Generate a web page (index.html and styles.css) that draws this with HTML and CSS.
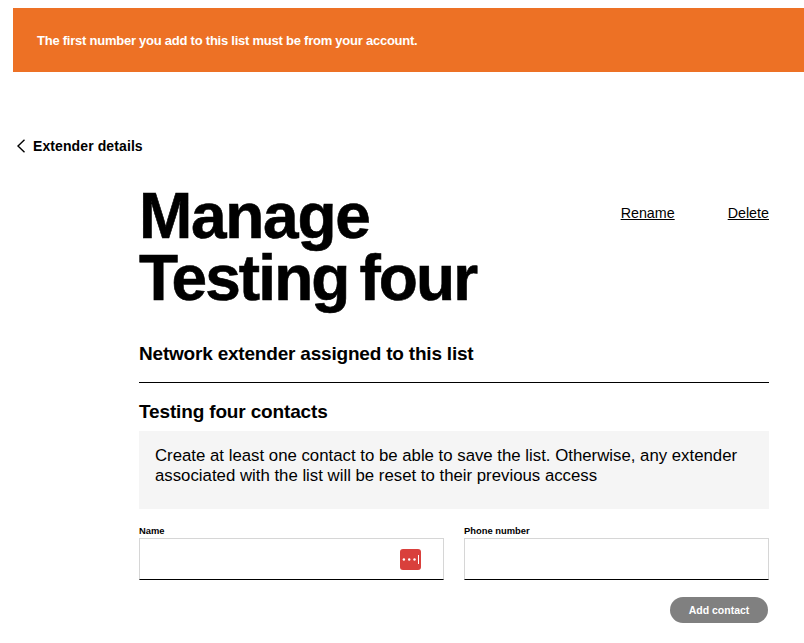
FILE: index.html
```html
<!DOCTYPE html>
<html>
<head>
<meta charset="utf-8">
<title>Manage Testing four</title>
<link rel="stylesheet" href="styles.css">
</head>
<body>
<div class="banner">The first number you add to this list must be from your account.</div>
<a class="back" href="#">
  <svg class="back-icon" width="10" height="14" viewBox="0 0 10 14"><path d="M8.5 0.8 L2 7 L8.5 13.2" fill="none" stroke="#000" stroke-width="1.4"/></svg>
  Extender details
</a>
<div class="main">
  <div class="title-row">
    <h1>Manage<br><span class="title-second">Testing four</span></h1>
    <div class="actions">
      <a href="#">Rename</a>
      <a href="#">Delete</a>
    </div>
  </div>
  <h2 class="assigned">Network extender assigned to this list</h2>
  <h2 class="contacts">Testing four contacts</h2>
  <div class="note">Create at least one contact to be able to save the list. Otherwise, any extender associated with the list will be reset to their previous access</div>
  <div class="fields">
    <div class="field">
      <label>Name</label>
      <div class="input">
        <svg class="pass-icon" width="21" height="21" viewBox="0 0 21 21">
          <rect width="21" height="21" rx="3" fill="#d9403c"/>
          <circle cx="3.9" cy="10.5" r="1.2" fill="#fff"/>
          <circle cx="9.2" cy="10.5" r="1.2" fill="#fff"/>
          <circle cx="14.5" cy="10.5" r="1.2" fill="#fff"/>
          <rect x="18" y="6" width="1" height="9" fill="#fff"/>
        </svg>
      </div>
    </div>
    <div class="field">
      <label>Phone number</label>
      <div class="input"></div>
    </div>
  </div>
  <div class="buttons"><button>Add contact</button></div>
</div>
</body>
</html>
```

FILE: styles.css
```css
html, body {
  margin: 0;
  padding: 0;
  background: #fff;
}
body {
  font-family: "Liberation Sans", Arial, sans-serif;
  color: #000;
  height: 643px;
  overflow: hidden;
}
.banner {
  margin: 8px 0 0 13px;
  height: 64px;
  box-sizing: border-box;
  padding-left: 24px;
  background: #ed7125;
  color: #fff;
  font-size: 13px;
  font-weight: bold;
  line-height: 66px;
  letter-spacing: -0.24px;
}
.back {
  display: flex;
  align-items: center;
  gap: 7px;
  margin: 65px 0 0 16px;
  height: 18px;
  color: #000;
  font-size: 14px;
  font-weight: bold;
  text-decoration: none;
  letter-spacing: 0.1px;
}
.main {
  margin: 0 35px 0 139px;
}
.title-row {
  display: flex;
  justify-content: space-between;
  margin-top: 30px;
}
h1 {
  margin: 0;
  font-size: 64px;
  line-height: 62px;
  font-weight: bold;
  letter-spacing: -1.3px;
  -webkit-text-stroke: 0.6px #000;
}
.title-second {
  letter-spacing: -1.9px;
  word-spacing: -5px;
}
.actions {
  display: flex;
  gap: 53px;
  font-size: 14.3px;
  padding-top: 20px;
}
.actions a {
  color: #000;
}
h2 {
  margin: 0;
  font-size: 19px;
  font-weight: bold;
  letter-spacing: -0.2px;
}
.assigned {
  margin-top: 33px;
  line-height: 24px;
  padding-bottom: 16px;
  border-bottom: 1px solid #000;
}
.contacts {
  margin-top: 17px;
  line-height: 24px;
  letter-spacing: -0.15px;
}
.note {
  margin-top: 7px;
  height: 78px;
  box-sizing: border-box;
  padding: 15px 16px;
  background: #f5f5f5;
  font-size: 16.8px;
  line-height: 20px;
}
.fields {
  display: flex;
  gap: 20px;
  margin-top: 15px;
}
.field {
  flex: 1;
}
.field label {
  display: block;
  font-size: 9.4px;
  font-weight: bold;
  line-height: 14px;
}
.input {
  display: flex;
  align-items: center;
  justify-content: flex-end;
  height: 42px;
  box-sizing: border-box;
  padding-right: 22px;
  border: 1px solid #d6d6d6;
  border-bottom: 1px solid #000;
}
.buttons {
  display: flex;
  justify-content: flex-end;
  margin: 17px 1px 0 0;
}
button {
  width: 98px;
  height: 26px;
  border: 0;
  border-radius: 13px;
  background: #808080;
  color: #fff;
  font-family: "Liberation Sans", Arial, sans-serif;
  font-size: 10.5px;
  font-weight: bold;
}
```
